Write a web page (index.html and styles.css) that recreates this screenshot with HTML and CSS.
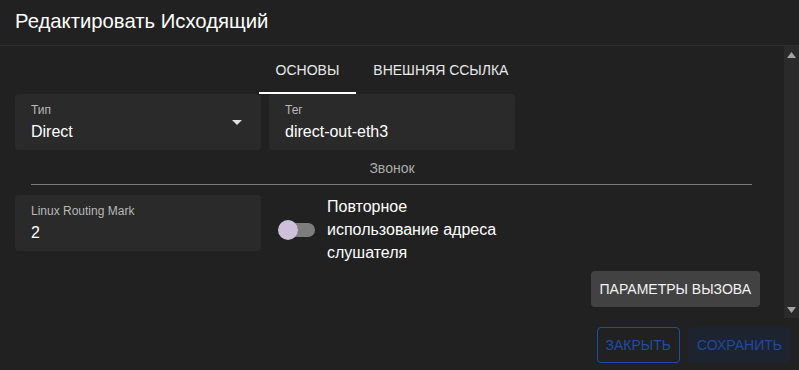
FILE: index.html
```html
<!DOCTYPE html>
<html lang="ru">
<head>
<meta charset="utf-8">
<title>Редактировать Исходящий</title>
<link rel="stylesheet" href="styles.css">
</head>
<body>
<div class="dialog">
  <header class="dialog-header">Редактировать Исходящий</header>
  <div class="dialog-body">
    <div class="content">
      <nav class="tabs">
        <div class="tab tab-active">Основы</div>
        <div class="tab">Внешняя ссылка</div>
      </nav>
      <div class="grid-row">
        <div class="field">
          <div class="field-text">
            <div class="field-label">Тип</div>
            <div class="field-value">Direct</div>
          </div>
          <svg class="select-arrow" width="10" height="5" viewBox="0 0 10 5"><path d="M0 0h10L5 5z" fill="#e0e0e0"/></svg>
        </div>
        <div class="field">
          <div class="field-text">
            <div class="field-label">Тег</div>
            <div class="field-value">direct-out-eth3</div>
          </div>
        </div>
        <div></div>
      </div>
      <div class="section-title">Звонок</div>
      <div class="divider"></div>
      <div class="grid-row grid-row-2">
        <div class="field">
          <div class="field-text">
            <div class="field-label">Linux Routing Mark</div>
            <div class="field-value">2</div>
          </div>
        </div>
        <label class="switch-label">
          <svg class="switch" width="58" height="38" viewBox="0 0 58 38">
            <rect x="12" y="12" width="34" height="14" rx="7" fill="#7d7d7d"/>
            <circle cx="19" cy="19.5" r="10" fill="#000" opacity="0.25"/>
            <circle cx="19" cy="19" r="10" fill="#cfc0da"/>
          </svg>
          <span class="switch-text">Повторное использование адреса слушателя</span>
        </label>
        <div></div>
      </div>
      <div class="actions-row">
        <button class="btn btn-grey">Параметры вызова</button>
      </div>
    </div>
    <div class="scrollbar">
      <svg width="9" height="6" viewBox="0 0 9 6"><path d="M4.5 0L9 6H0z" fill="#a3a3a3"/></svg>
      <svg width="9" height="6" viewBox="0 0 9 6"><path d="M0 0h9L4.5 6z" fill="#a3a3a3"/></svg>
    </div>
  </div>
  <footer class="dialog-footer">
    <button class="btn btn-outline">Закрыть</button>
    <button class="btn btn-save">Сохранить</button>
  </footer>
</div>
</body>
</html>
```
FILE: styles.css
```css
* { box-sizing: border-box; }
html, body {
  margin: 0;
  padding: 0;
  width: 799px;
  height: 370px;
  overflow: hidden;
  background: #212121;
  font-family: "Liberation Sans", Arial, sans-serif;
  color: #fff;
}
.dialog {
  display: flex;
  flex-direction: column;
  height: 370px;
}
.dialog-header {
  height: 46px;
  line-height: 42px;
  padding-left: 15px;
  font-size: 20.3px;
  border-bottom: 1px solid #2f2f2f;
}
.dialog-body {
  display: flex;
  height: 272px;
}
.content {
  flex: 1;
  padding: 0 15px;
  overflow: hidden;
}
.tabs {
  display: flex;
  justify-content: center;
  height: 48px;
}
.tab {
  padding: 0 17px;
  line-height: 48px;
  font-size: 14px;
  text-transform: uppercase;
  color: #e8e8e8;
}
.tab-active {
  box-shadow: inset 0 -2px 0 #fff;
}
.grid-row {
  display: grid;
  grid-template-columns: 1fr 1fr 1fr;
  gap: 8px;
}
.field {
  display: flex;
  align-items: center;
  height: 56px;
  background: #2a2a2a;
  border-radius: 4px;
  padding-left: 16px;
}
.field-text {
  flex: 1;
  align-self: flex-start;
  padding-top: 10px;
}
.field-label {
  font-size: 12px;
  line-height: 12px;
  color: #b8b8b8;
}
.field-value {
  margin-top: 6px;
  font-size: 16px;
  line-height: 19px;
}
.select-arrow {
  margin-right: 19px;
  margin-top: 1px;
}
.section-title {
  margin-top: 8px;
  text-align: center;
  font-size: 14px;
  line-height: 20px;
  color: #ababab;
}
.divider {
  margin: 6px 17px 0 16px;
  height: 1px;
  background: #7a7a7a;
}
.grid-row-2 {
  margin-top: 10px;
  align-items: start;
}
.switch-label {
  display: flex;
  align-items: center;
}
.switch { flex: none; }
.switch-text {
  font-size: 16px;
  line-height: 23px;
}
.actions-row {
  display: flex;
  justify-content: flex-end;
  padding-right: 9px;
  margin-top: 7px;
}
.btn {
  height: 36px;
  padding: 0 9px;
  border: 0;
  border-radius: 4px;
  font-family: "Liberation Sans", Arial, sans-serif;
  font-size: 14px;
  text-transform: uppercase;
  background: transparent;
}
.btn-grey {
  background: #424242;
  color: #f2f2f2;
}
.scrollbar {
  width: 15px;
  flex: none;
  background: #2a2a2a;
  display: flex;
  flex-direction: column;
  justify-content: space-between;
  align-items: center;
  padding: 6px 0 5px;
}
.dialog-footer {
  flex: 1;
  display: flex;
  justify-content: flex-end;
  gap: 8px;
  padding: 9px 8px 0 0;
}
.btn-outline {
  border: 1px solid #1d4ea5;
  color: #1d4ea5;
  padding: 0 8px;
}
.btn-save {
  background: #1d2430;
  color: #1d4a9e;
  padding: 0 9px;
}
```
